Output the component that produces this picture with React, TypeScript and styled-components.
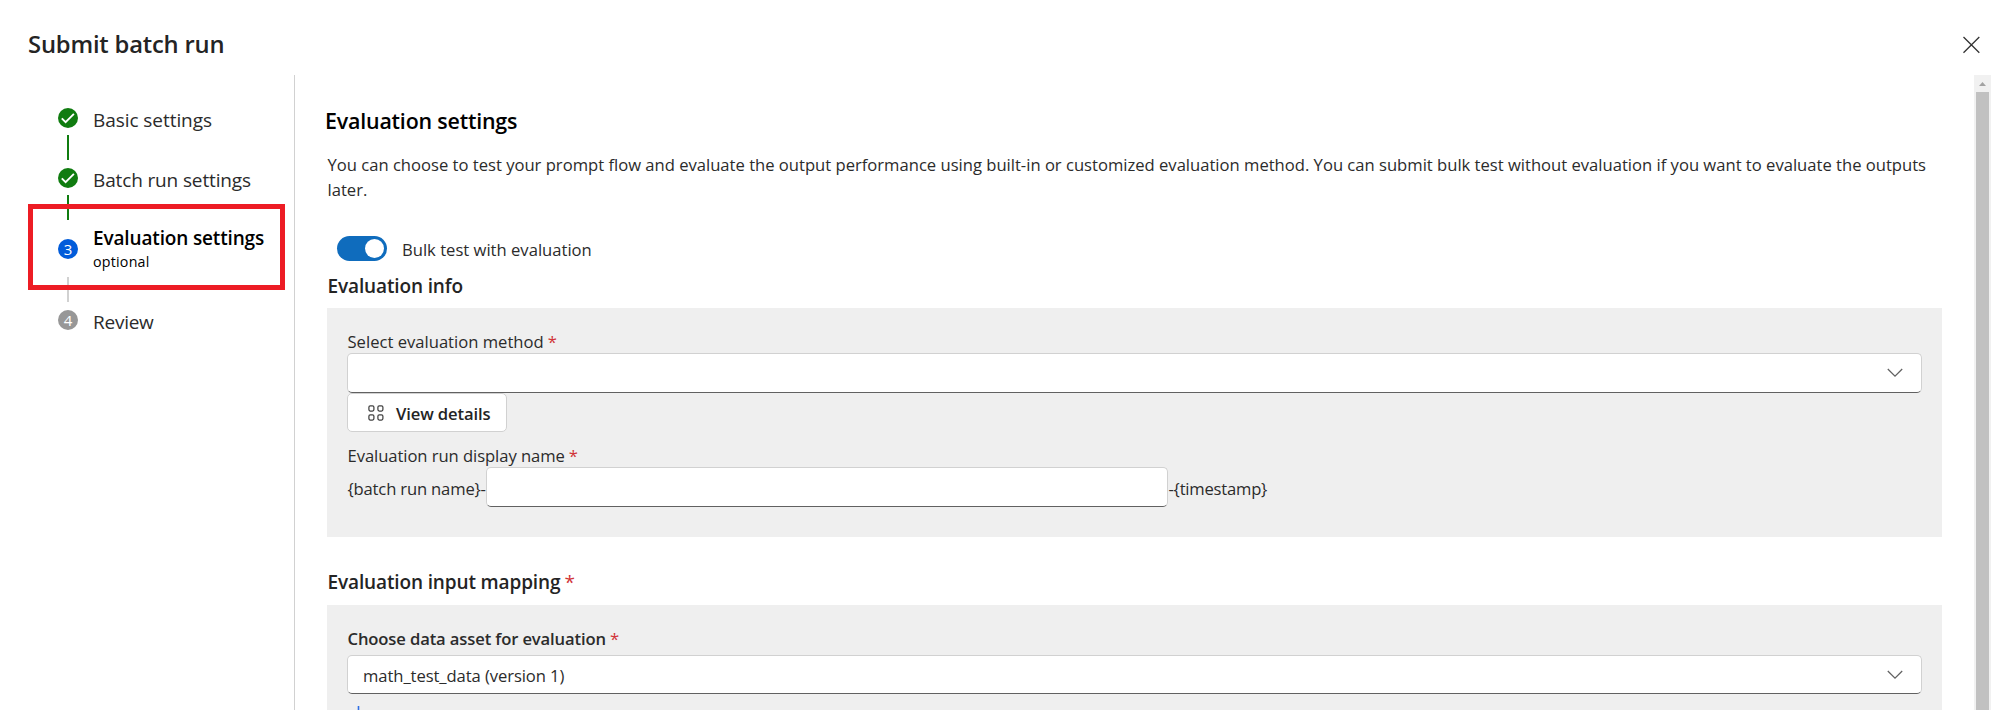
import React from 'react';
import styled, { createGlobalStyle } from 'styled-components';

const GlobalStyle = createGlobalStyle`
  * { box-sizing: border-box; }
  body {
    margin: 0;
    background: #fff;
    color: #2b2b2b;
    font-family: "Open Sans", "Noto Sans", sans-serif;
    overflow: hidden;
  }
`;

const Dialog = styled.div`
  display: flex;
  flex-direction: column;
  width: 100%;
  height: 710px;
  overflow: hidden;
`;

const Header = styled.header`
  display: flex;
  justify-content: space-between;
  flex: none;
  height: 75px;
  padding: 28px 27px 0 28px;
`;

const Title = styled.h1`
  margin: 0;
  color: #242424;
  font-size: 23.75px;
  font-weight: 600;
  line-height: 32px;
  letter-spacing: -0.175px;
`;

const CloseButton = styled.button`
  display: flex;
  width: 19px;
  height: 19px;
  margin-top: 8px;
  padding: 0;
  border: 0;
  background: none;
  color: #242424;
`;

const Body = styled.div`
  display: flex;
  flex: 1;
  min-height: 0;
`;

const Steps = styled.nav`
  position: relative;
  flex: none;
  width: 295px;
  padding: 33px 0 0 58px;
  border-right: 1px solid #d1d1d1;
`;

const StepRow = styled.div<{ $tall?: boolean }>`
  display: flex;
  align-items: center;
  height: ${(p) => (p.$tall ? 48 : 20)}px;
  gap: 15px;
`;

const Marker = styled.span<{ $color: string }>`
  display: flex;
  align-items: center;
  justify-content: center;
  flex: none;
  width: 20px;
  height: 20px;
  border-radius: 50%;
  background: ${(p) => p.$color};
  color: #fff;
  font-size: 15px;
  line-height: 20px;
`;

const StepText = styled.div`
  display: flex;
  flex-direction: column;
`;

const StepLabel = styled.span<{ $active?: boolean; $spacing: number }>`
  padding-top: ${(p) => (p.$active ? 0 : 4)}px;
  color: ${(p) => (p.$active ? '#000' : '#2b2b2b')};
  font-size: 19px;
  font-weight: ${(p) => (p.$active ? 600 : 400)};
  line-height: 26px;
  letter-spacing: ${(p) => p.$spacing}px;
  white-space: nowrap;
`;

const StepHint = styled.span`
  color: #000;
  font-size: 14.25px;
  line-height: 22px;
  letter-spacing: 0.22px;
`;

const Connector = styled.div<{ $color: string; $before: number; $after: number }>`
  width: 2px;
  height: 25px;
  margin: ${(p) => p.$before}px 0 ${(p) => p.$after}px 9px;
  background: ${(p) => p.$color};
`;

const Highlight = styled.div`
  position: absolute;
  top: 129px;
  left: 28px;
  width: 257px;
  height: 86px;
  border: 5px solid #ed1c24;
`;

const Content = styled.main`
  flex: 1;
  min-width: 0;
  padding: 30px 32px 0 32px;
`;

const Heading = styled.h2`
  margin: 0 0 0 -2px;
  color: #000;
  font-size: 21.4px;
  font-weight: 600;
  line-height: 32px;
  letter-spacing: -0.19px;
`;

const Description = styled.p`
  margin: 15px 0 0;
  padding-left: 0.5px;
  font-size: 16.625px;
  line-height: 25px;
  letter-spacing: -0.006px;
`;

const ToggleRow = styled.label`
  display: flex;
  align-items: center;
  gap: 15px;
  height: 25px;
  margin: 34px 0 0 10px;
`;

const ControlText = styled.span<{ $spacing?: number }>`
  padding-top: 2px;
  font-size: 16.625px;
  line-height: 23px;
  letter-spacing: ${(p) => p.$spacing ?? 0}px;
  white-space: nowrap;
`;

const Toggle = styled.span`
  display: flex;
  align-items: center;
  justify-content: flex-end;
  width: 50px;
  height: 25px;
  padding-right: 3px;
  border-radius: 13px;
  background: #0f6cbd;
`;

const Knob = styled.span`
  width: 19px;
  height: 19px;
  border-radius: 50%;
  background: #fff;
`;

const SectionTitle = styled.h3<{ $top: number; $bottom: number }>`
  margin: ${(p) => p.$top}px 0 ${(p) => p.$bottom}px;
  padding-left: 0.5px;
  color: #242424;
  font-size: 19px;
  font-weight: 600;
  line-height: 26px;
  letter-spacing: -0.13px;
`;

const Panel = styled.section<{ $height: number }>`
  display: flex;
  flex-direction: column;
  align-items: flex-start;
  height: ${(p) => p.$height}px;
  padding: 21px 20px 0;
  background: #efefef;
`;

const FieldLabel = styled.label<{ $strong?: boolean; $top?: number; $spacing?: number }>`
  margin-top: ${(p) => p.$top ?? 0}px;
  padding-left: 0.5px;
  font-size: 16.625px;
  font-weight: ${(p) => (p.$strong ? 600 : 400)};
  line-height: 25px;
  letter-spacing: ${(p) => p.$spacing ?? 0}px;
`;

const Required = styled.span`
  margin-left: 4px;
  color: #d13438;
  font-weight: 400;
`;

const Field = styled.div<{ $width?: number; $top?: number; $height?: number }>`
  display: flex;
  align-items: center;
  justify-content: space-between;
  flex: none;
  width: ${(p) => (p.$width ? `${p.$width}px` : '100%')};
  height: ${(p) => p.$height ?? 40}px;
  margin-top: ${(p) => p.$top ?? 0}px;
  padding: 0 18px 0 15px;
  border: 1px solid #d1d1d1;
  border-bottom-color: #616161;
  border-radius: 5px;
  background: #fff;
`;

const DetailsButton = styled.button`
  display: flex;
  align-items: center;
  width: 160px;
  height: 39px;
  padding: 0 0 0 20px;
  gap: 12px;
  border: 1px solid #d1d1d1;
  border-radius: 5px;
  background: #fff;
  color: #242424;
  font-family: inherit;
  font-weight: 600;
`;

const NameRow = styled.div`
  display: flex;
  align-items: center;
  margin-top: -1px;
`;

const Affix = styled.span<{ $width?: number; $spacing: number }>`
  width: ${(p) => (p.$width ? `${p.$width}px` : 'auto')};
  padding: 3px 0 0 0.5px;
  font-size: 16.625px;
  line-height: 25px;
  letter-spacing: ${(p) => p.$spacing}px;
  white-space: nowrap;
`;

const AddLink = styled.div`
  display: flex;
  margin: 12px 0 0 4px;
`;

const Scrollbar = styled.div`
  display: flex;
  flex-direction: column;
  align-items: center;
  flex: none;
  width: 17px;
  margin-right: 17px;
  background: #f1f1f1;
`;

const ScrollArrow = styled.div`
  display: flex;
  align-items: center;
  justify-content: center;
  width: 17px;
  height: 17px;
`;

const ScrollThumb = styled.div`
  flex: 1;
  width: 13px;
  background: #c1c1c1;
`;

const Check = () => (
  <svg width="20" height="20" viewBox="0 0 20 20" fill="none">
    <path d="M3.8 10.3L7.6 14.1L15.9 5.9" stroke="#fff" strokeWidth="1.9" />
  </svg>
);

const Chevron = () => (
  <svg width="16" height="10" viewBox="0 0 16 10" fill="none">
    <path d="M0.8 1L8 8.2L15.2 1" stroke="#616161" strokeWidth="1.25" />
  </svg>
);

const GridIcon = () => (
  <svg width="16" height="16" viewBox="0 0 16 16" fill="none" stroke="#424242" strokeWidth="1.25">
    <rect x="0.9" y="0.8" width="5" height="5.2" rx="1.4" />
    <rect x="9.9" y="0.8" width="5" height="5.2" rx="1.4" />
    <rect x="0.9" y="9.8" width="5" height="5.2" rx="1.4" />
    <rect x="9.9" y="9.8" width="5" height="5.2" rx="1.4" />
  </svg>
);

export default function App() {
  return (
    <>
      <GlobalStyle />
      <Dialog>
        <Header>
          <Title>Submit batch run</Title>
          <CloseButton aria-label="Close">
            <svg width="19" height="19" viewBox="0 0 19 19" fill="none">
              <path d="M1.5 1L17.3 16.8M17.3 1L1.5 16.8" stroke="#333" strokeWidth="1.3" />
            </svg>
          </CloseButton>
        </Header>
        <Body>
          <Steps>
            <StepRow>
              <Marker $color="#107c10"><Check /></Marker>
              <StepLabel $spacing={-0.06}>Basic settings</StepLabel>
            </StepRow>
            <Connector $color="#107c10" $before={7} $after={8} />
            <StepRow>
              <Marker $color="#107c10"><Check /></Marker>
              <StepLabel $spacing={-0.137}>Batch run settings</StepLabel>
            </StepRow>
            <Connector $color="#107c10" $before={7} $after={5} />
            <StepRow $tall>
              <Marker $color="#015cda">3</Marker>
              <StepText>
                <StepLabel $active $spacing={-0.15}>Evaluation settings</StepLabel>
                <StepHint>optional</StepHint>
              </StepText>
            </StepRow>
            <Connector $color="#d1d1d1" $before={4} $after={8} />
            <StepRow>
              <Marker $color="#979797">4</Marker>
              <StepLabel $spacing={-0.25}>Review</StepLabel>
            </StepRow>
            <Highlight />
          </Steps>
          <Content>
            <Heading>Evaluation settings</Heading>
            <Description>
              You can choose to test your prompt flow and evaluate the output performance using built-in or customized
              evaluation method. You can submit bulk test without evaluation if you want to evaluate the outputs later.
            </Description>
            <ToggleRow>
              <Toggle><Knob /></Toggle>
              <ControlText>Bulk test with evaluation</ControlText>
            </ToggleRow>
            <SectionTitle $top={12} $bottom={9}>Evaluation info</SectionTitle>
            <Panel $height={229}>
              <FieldLabel>Select evaluation method<Required>*</Required></FieldLabel>
              <Field $top={-1}><span /><Chevron /></Field>
              <DetailsButton>
                <GridIcon />
                <ControlText $spacing={-0.117}>View details</ControlText>
              </DetailsButton>
              <FieldLabel $top={11} $spacing={-0.066}>Evaluation run display name<Required>*</Required></FieldLabel>
              <NameRow>
                <Affix $width={139} $spacing={-0.17}>{'{batch run name}-'}</Affix>
                <Field $width={682} />
                <Affix $spacing={-0.22}>{'-{timestamp}'}</Affix>
              </NameRow>
            </Panel>
            <SectionTitle $top={32} $bottom={10}>Evaluation input mapping<Required>*</Required></SectionTitle>
            <Panel $height={200}>
              <FieldLabel $strong $spacing={-0.127}>Choose data asset for evaluation<Required>*</Required></FieldLabel>
              <Field $top={4} $height={39}>
                <ControlText $spacing={-0.084}>math_test_data (version 1)</ControlText>
                <Chevron />
              </Field>
              <AddLink>
                <svg width="15" height="15" viewBox="0 0 15 15" stroke="#2f6fe4" strokeWidth="1.6">
                  <path d="M7.5 0V15M0 7.5H15" />
                </svg>
              </AddLink>
            </Panel>
          </Content>
          <Scrollbar>
            <ScrollArrow>
              <svg width="7" height="4" viewBox="0 0 7 4"><path d="M0 4L3.5 0L7 4Z" fill="#a3a3a3" /></svg>
            </ScrollArrow>
            <ScrollThumb />
          </Scrollbar>
        </Body>
      </Dialog>
    </>
  );
}
